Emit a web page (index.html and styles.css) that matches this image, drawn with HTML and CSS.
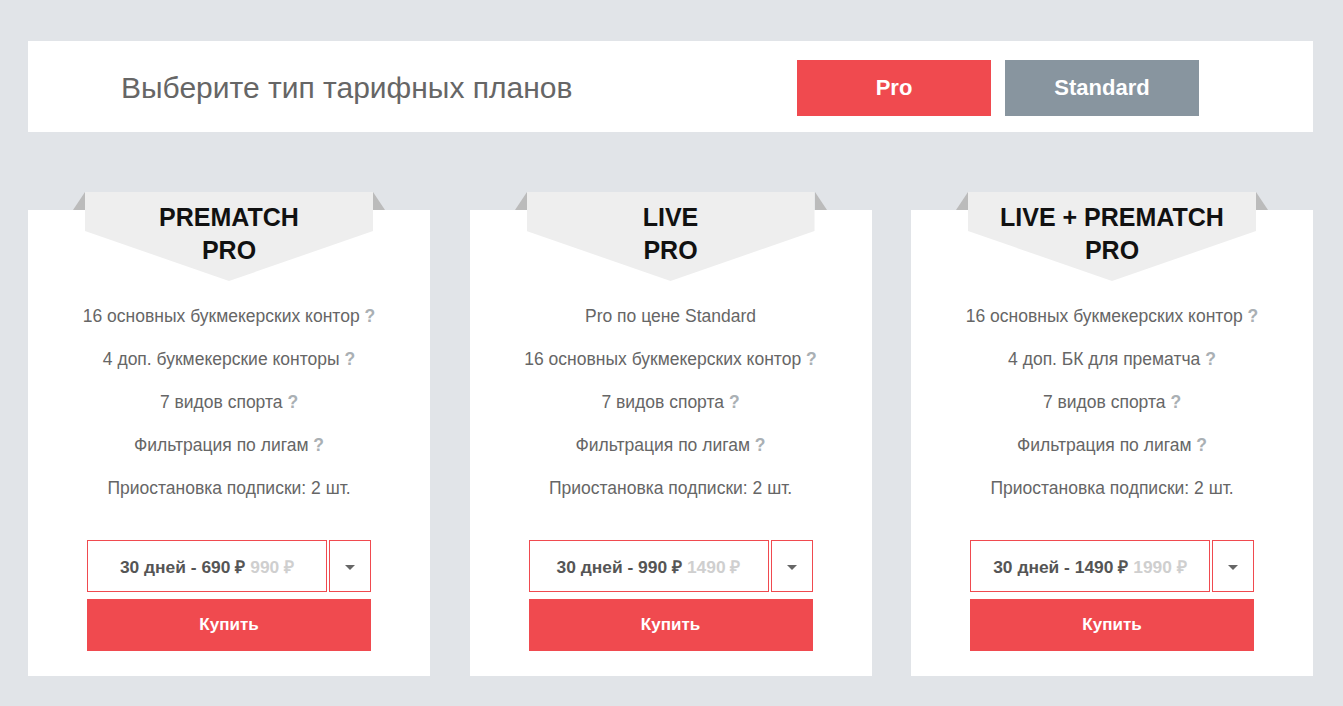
FILE: index.html
```html
<!DOCTYPE html>
<html lang="ru">
<head>
<meta charset="utf-8">
<title>Тарифные планы</title>
<link rel="stylesheet" href="styles.css">
</head>
<body>
<div class="page">
  <header class="chooser">
    <h1 class="chooser-title">Выберите тип тарифных планов</h1>
    <div class="chooser-buttons">
      <button class="tab tab-active">Pro</button>
      <button class="tab tab-muted">Standard</button>
    </div>
  </header>

  <section class="plans">
    <article class="plan">
      <div class="ribbon-wrap"><div class="ribbon">PREMATCH<br>PRO</div></div>
      <ul class="features">
        <li>16 основных букмекерских контор <span class="q">?</span></li>
        <li>4 доп. букмекерские конторы <span class="q">?</span></li>
        <li>7 видов спорта <span class="q">?</span></li>
        <li>Фильтрация по лигам <span class="q">?</span></li>
        <li>Приостановка подписки: 2 шт.</li>
      </ul>
      <div class="select-row">
        <div class="select">30 дней - 690 ₽ <span class="old">990 ₽</span></div>
        <div class="drop"><span class="caret"></span></div>
      </div>
      <button class="buy">Купить</button>
    </article>

    <article class="plan">
      <div class="ribbon-wrap"><div class="ribbon">LIVE<br>PRO</div></div>
      <ul class="features">
        <li>Pro по цене Standard</li>
        <li>16 основных букмекерских контор <span class="q">?</span></li>
        <li>7 видов спорта <span class="q">?</span></li>
        <li>Фильтрация по лигам <span class="q">?</span></li>
        <li>Приостановка подписки: 2 шт.</li>
      </ul>
      <div class="select-row">
        <div class="select">30 дней - 990 ₽ <span class="old">1490 ₽</span></div>
        <div class="drop"><span class="caret"></span></div>
      </div>
      <button class="buy">Купить</button>
    </article>

    <article class="plan">
      <div class="ribbon-wrap"><div class="ribbon">LIVE + PREMATCH<br>PRO</div></div>
      <ul class="features">
        <li>16 основных букмекерских контор <span class="q">?</span></li>
        <li>4 доп. БК для прематча <span class="q">?</span></li>
        <li>7 видов спорта <span class="q">?</span></li>
        <li>Фильтрация по лигам <span class="q">?</span></li>
        <li>Приостановка подписки: 2 шт.</li>
      </ul>
      <div class="select-row">
        <div class="select">30 дней - 1490 ₽ <span class="old">1990 ₽</span></div>
        <div class="drop"><span class="caret"></span></div>
      </div>
      <button class="buy">Купить</button>
    </article>
  </section>
</div>
</body>
</html>
```

FILE: styles.css
```css
* { box-sizing: border-box; }

html, body {
  margin: 0;
  padding: 0;
  background: #e1e4e8;
  font-family: "Liberation Sans", Arial, sans-serif;
}

.page {
  width: 1285px;
  margin-left: 28px;
  padding-top: 41px;
}

.chooser {
  background: #fff;
  height: 91px;
  display: flex;
  align-items: center;
  padding: 3px 114px 0 93px;
}

.chooser-title {
  margin: 0;
  font-size: 30px;
  font-weight: normal;
  color: #666;
}

.chooser-buttons {
  margin-left: auto;
  display: flex;
  gap: 14px;
}

.tab {
  width: 194px;
  height: 56px;
  border: 0;
  color: #fff;
  font-family: inherit;
  font-weight: bold;
  font-size: 22px;
  cursor: pointer;
}

.tab-active { background: #f04a4f; }
.tab-muted { background: #88959f; }

.plans {
  display: grid;
  grid-template-columns: repeat(3, 402px);
  justify-content: space-between;
  margin-top: 78px;
}

.plan {
  background: #fff;
  padding: 0 59px 25px;
  text-align: center;
}

.ribbon-wrap {
  position: relative;
  width: 288px;
  margin: -18px 0 0 -2px;
}

.ribbon-wrap::before,
.ribbon-wrap::after {
  content: "";
  position: absolute;
  top: 0;
  width: 0;
  height: 0;
  border-bottom: 18px solid #bbbbbb;
}

.ribbon-wrap::before {
  left: -12px;
  border-left: 12px solid transparent;
}

.ribbon-wrap::after {
  right: -12px;
  border-right: 12px solid transparent;
}

.ribbon {
  height: 89px;
  background: #eeeeee;
  clip-path: polygon(0 0, 100% 0, 100% 39px, 50% 89px, 0 39px);
  padding-top: 9px;
  font-size: 25px;
  line-height: 33px;
  font-weight: bold;
  color: #111;
}

.features {
  list-style: none;
  margin: 14px 0 0 -59px;
  padding: 0;
  width: 402px;
}

.features li {
  height: 43px;
  line-height: 43px;
  font-size: 17.5px;
  color: #666;
}

.q {
  color: #aab0b4;
  font-weight: bold;
}

.select-row {
  display: flex;
  gap: 2px;
  margin-top: 30px;
  height: 52px;
}

.select {
  width: 240px;
  border: 1px solid #f04a4f;
  display: flex;
  align-items: center;
  justify-content: center;
  gap: 5px;
  padding-bottom: 1px;
  font-size: 17.4px;
  font-weight: bold;
  color: #555;
}

.old { color: #cfcfcf; }

.drop {
  width: 42px;
  border: 1px solid #f04a4f;
  display: flex;
  align-items: center;
  justify-content: center;
}

.caret {
  width: 0;
  height: 0;
  border-left: 5px solid transparent;
  border-right: 5px solid transparent;
  border-top: 5px solid #666;
  margin-top: 2px;
}

.buy {
  display: block;
  width: 284px;
  height: 52px;
  margin-top: 7px;
  border: 0;
  background: #f04a4f;
  color: #fff;
  font-family: inherit;
  font-weight: bold;
  font-size: 17px;
  cursor: pointer;
}
```
